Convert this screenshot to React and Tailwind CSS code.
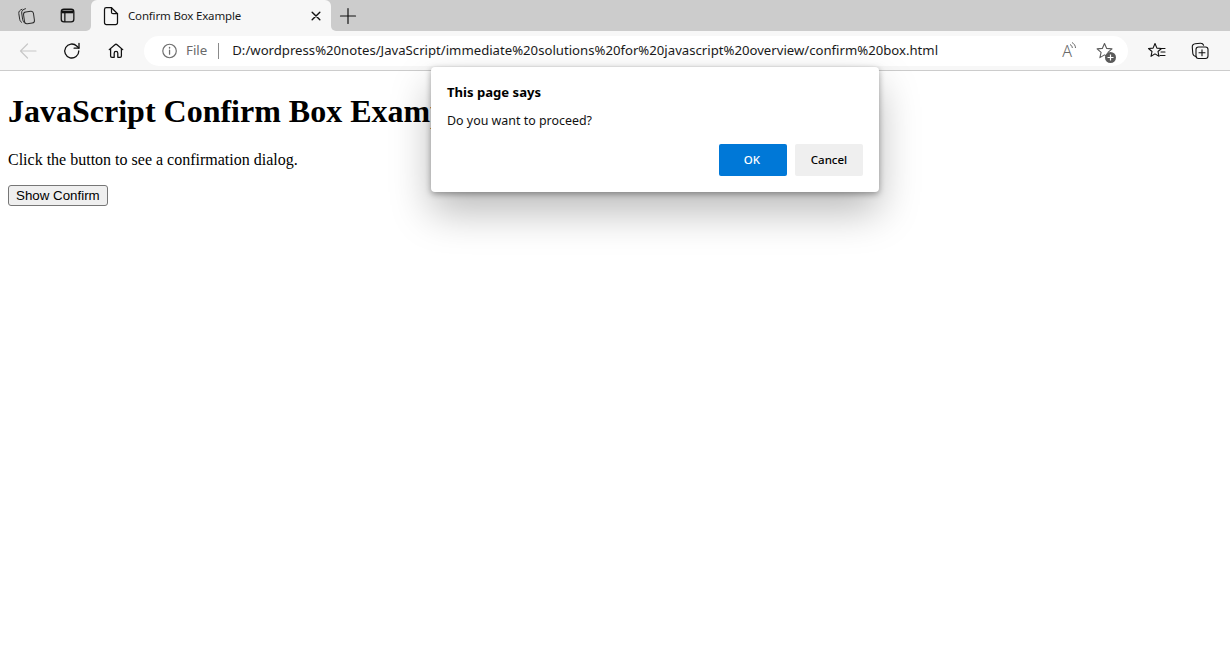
import { useEffect } from "react";

const uiFont = "font-['Noto_Sans','Open_Sans',sans-serif]";

function Stroke({ children, size = 20, color = "#111111", width = 1.3, className = "" }) {
  return (
    <svg width={size} height={size} viewBox="0 0 20 20" fill="none" stroke={color} strokeWidth={width} strokeLinecap="round" strokeLinejoin="round" className={className}>
      {children}
    </svg>
  );
}

function TabStrip() {
  return (
    <div className="flex h-[31px] bg-[#cccccc]">
      {/* Collections + vertical tabs */}
      <div className="flex h-full w-[91px] items-center pl-[16px]">
        <Stroke size={20} className="mt-[1px]" width={1} color="#2b2b2b">
          <rect x="8" y="5.500" width="10" height="12" rx="2.500" transform="rotate(-8 13 11.500)" />
          <path d="M6 3.300C3.800 4 2.500 5.500 2.800 7.500l.9 5.800c.2 1.300.8 2.300 1.800 3" />
          <path d="M9.500 2.700C7.200 3.300 5.400 4.700 5.700 7l.9 6.200c.2 1.300.9 2.800 2 3.800" />
        </Stroke>
        <Stroke size={18} className="ml-[23px] mt-[1px]" width={1.4}>
          <rect x="2.500" y="2.500" width="14" height="14" rx="3" />
          <path d="M3 5.500h13" strokeWidth="3" strokeLinecap="butt" />
          <path d="M6.500 6v10" />
        </Stroke>
      </div>
      {/* Active tab */}
      <div className="relative flex h-full w-[240px] items-center rounded-t-[6px] bg-[#f7f7f7] pl-[10px] pr-[8px]">
        <span className="absolute -left-[5px] bottom-0 h-[5px] w-[5px] bg-[#f7f7f7]">
          <span className="block h-full w-full rounded-br-[5px] bg-[#cccccc]" />
        </span>
        <span className="absolute -right-[5px] bottom-0 h-[5px] w-[5px] bg-[#f7f7f7]">
          <span className="block h-full w-full rounded-bl-[5px] bg-[#cccccc]" />
        </span>
        <Stroke size={20} className="mt-[1px]" width={1.25}>
          <path d="M3.500 3.500a1.800 1.800 0 0 1 1.800-1.800h5.200l6 6v9a1.800 1.800 0 0 1-1.800 1.800H5.300a1.800 1.800 0 0 1-1.800-1.800z" />
          <path d="M10.500 1.700v4.500a1.500 1.500 0 0 0 1.500 1.500h4.500" />
        </Stroke>
        <span className="ml-[7px] mt-[1px] flex-1 text-[11.500px] leading-none tracking-[-0.17px] text-[#1a1a1a]">Confirm Box Example</span>
        <Stroke size={14} width={2}>
          <path d="M4.500 4.500l11 11M15.500 4.500l-11 11" />
        </Stroke>
      </div>
      <div className="flex h-full items-center pl-[7px]">
        <Stroke size={20} width={1.2} className="mt-[1px]">
          <path d="M10 2.500v15M2.500 10h15" />
        </Stroke>
      </div>
    </div>
  );
}

function Toolbar() {
  return (
    <div className="flex h-[40px] items-center border-b border-[#cccccc] bg-[#f7f7f7]">
      <div className="flex w-[144px] items-center pl-[18px]">
        <Stroke size={20} color="#c8c8c8" width={1.2}>
          <path d="M18 10H2.500M9.500 3l-7 7 7 7" />
        </Stroke>
        <Stroke size={20} className="ml-[24px]" width={1.3}>
          <path d="M16.800 10a7 7 0 1 1-2.100-5L16.800 7" />
          <path d="M17 2.300V7.200h-4.900" />
        </Stroke>
        <Stroke size={18} className="ml-[25px]" width={1.4}>
          <path d="M2.500 8.500L8.800 3a1.800 1.800 0 0 1 2.400 0l6.300 5.500" />
          <path d="M4 7.500V15.500a1.500 1.500 0 0 0 1.500 1.500H8V12.500a2 2 0 0 1 4 0V17h2.500a1.500 1.500 0 0 0 1.500-1.500V7.500" />
        </Stroke>
      </div>
      {/* Address bar */}
      <div className="flex h-[30px] w-[984px] items-center rounded-full bg-white pl-[17px] pr-[13px]">
        <Stroke size={18} color="#6f6f6f">
          <circle cx="9.500" cy="10" r="7.500" />
          <path d="M9.500 9v4.500" strokeWidth="1.400" />
          <path d="M9.500 6.200v.4" strokeWidth="1.600" />
        </Stroke>
        <span className="ml-[7px] text-[13.300px] text-[#6a6a6a]">File</span>
        <span className="ml-[11px] h-[16px] w-px bg-[#8a8a8a]" />
        <span className="ml-[13px] flex-1 text-[13.170px] text-[#1a1a1a]">
          D:/wordpress%20notes/JavaScript/immediate%20solutions%20for%20javascript%20overview/confirm%20box.html
        </span>
        <span className="relative mr-[2px] text-[16px] font-light leading-none text-[#6a6a6a]">
          A
          <svg width="8" height="10" viewBox="0 0 8 10" fill="none" stroke="#6a6a6a" className="absolute -right-[5px] -top-[1px]">
            <path d="M1 2.500c1.500.8 2.300 2 2.300 3.500" />
            <path d="M3 .5c2 1.200 3.500 3 3.500 5.500" />
          </svg>
        </span>
        <span className="relative ml-[21px]">
          <Stroke size={20} color="#5a5a5a" width={1.1}>
            <path d="M9.500 2.500l2.200 4.900 5.300.5-4 3.500 1.100 5.200-4.600-2.700-4.600 2.700 1.200-5.200-4-3.500 5.200-.5z" />
          </Stroke>
          <span className="absolute -bottom-[2px] -right-[1px] flex h-[11px] w-[11px] items-center justify-center rounded-full bg-[#5a5a5a]">
            <svg width="7" height="7" viewBox="0 0 7 7" stroke="white" strokeWidth="1.200">
              <path d="M3.500 .5v6M.5 3.500h6" />
            </svg>
          </span>
        </span>
      </div>
      <div className="flex flex-1 items-center pl-[19px]">
        <Stroke size={20} width={1.1}>
          <path d="M8 2.500l1.900 4.600 4.600.4-3.500 3 1 4.800L8 12.900l-4 2.400 1-4.800-3.500-3 4.600-.4z" />
          <path d="M13.500 7.500h4.500M14 11h4M13 14.500h5" />
        </Stroke>
        <Stroke size={20} className="ml-[23px]" width={1.1}>
          <path d="M6 15.500c-2-.3-3-1.500-3.200-3L2.300 6.500C2.100 4.500 3.500 3 5.300 2.800l5-.5c1.500-.1 2.800.6 3.300 2" />
          <rect x="6" y="6" width="12" height="11.500" rx="2.500" />
          <path d="M12 8.700v6M9 11.700h6" />
        </Stroke>
      </div>
    </div>
  );
}

function ConfirmDialog() {
  return (
    <div className={`absolute left-[431px] top-[67px] h-[125px] w-[448px] rounded-[4px] bg-white px-[16px] pt-[16px] shadow-[0_2px_6px_rgba(0,0,0,0.35),0_20px_40px_rgba(0,0,0,0.27)] ${uiFont}`}>
      <div className="text-[13.100px] font-bold leading-[18px] text-black">This page says</div>
      <div className="mt-[11px] text-[12.430px] leading-[18px] text-[#111111]">Do you want to proceed?</div>
      <div className="mt-[14px] flex justify-end gap-[8px]">
        <button className="h-[32px] w-[68px] rounded-[2px] bg-[#0078d7] pr-[2px] text-[11.500px] font-medium text-white">OK</button>
        <button className="h-[32px] w-[68px] rounded-[2px] bg-[#efefef] text-[11.500px] font-medium text-black">Cancel</button>
      </div>
    </div>
  );
}

function App() {
  useEffect(() => {
    document.body.style.overflow = "hidden";
    return () => {
      document.body.style.overflow = "auto";
    };
  }, []);

  return (
    <div className={`relative h-[654px] w-[1230px] overflow-hidden bg-white ${uiFont}`}>
      <TabStrip />
      <Toolbar />

      {/* Page */}
      <div className="pl-[8px] font-['Liberation_Serif',serif] text-black">
        <h1 className="mt-[22px] text-[32px] font-bold leading-[37px]">JavaScript Confirm Box Example</h1>
        <p className="mt-[21px] text-[16px] leading-[18px]">Click the button to see a confirmation dialog.</p>
        <button className="mt-[16px] h-[21px] rounded-[3px] border border-[#767676] bg-[#efefef] px-[7px] font-['Liberation_Sans',sans-serif] text-[13.333px] leading-none">
          Show Confirm
        </button>
      </div>

      <ConfirmDialog />
    </div>
  );
}

export default App;
